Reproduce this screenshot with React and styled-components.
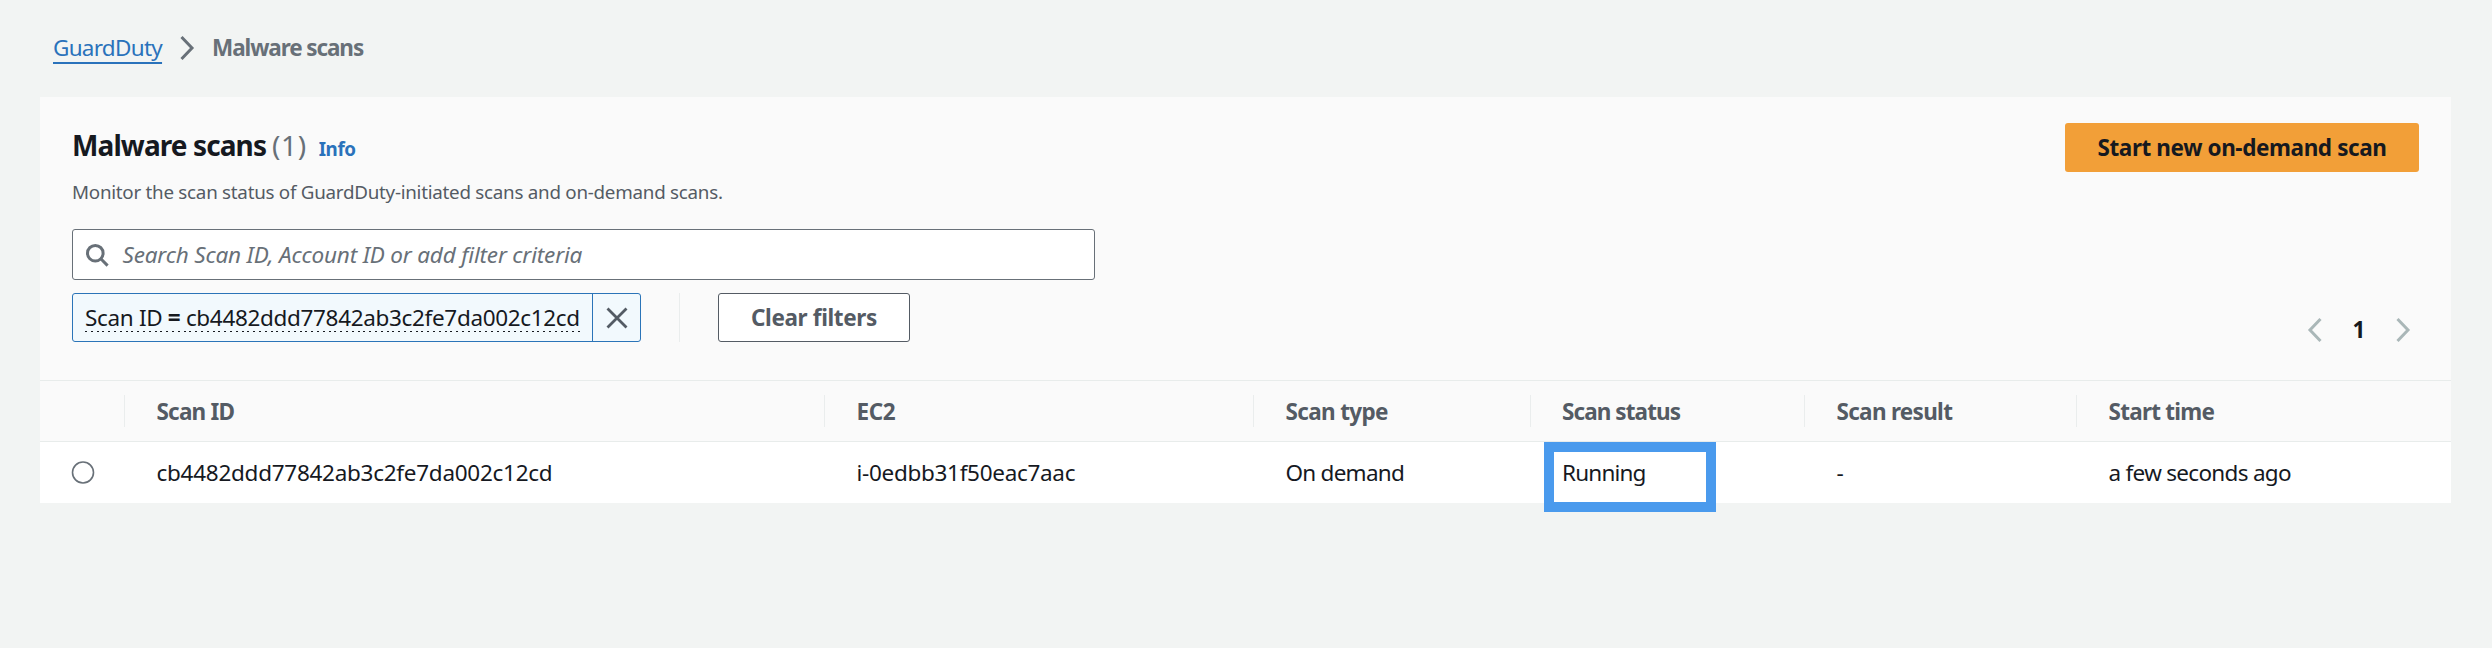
import React from "react";
import styled, { createGlobalStyle } from "styled-components";

const Global = createGlobalStyle`
  * { box-sizing: border-box; }
  body { margin: 0; background: #f2f4f3; color: #16191f; font-family: "Noto Sans", "Open Sans", sans-serif; font-size: 22.5px; }
  button { font: inherit; margin: 0; padding: 0; cursor: pointer; }
  svg { display: block; flex: none; }
`;

const Page = styled.main`min-height: 648px; background: #f2f4f3; padding: 0 41px 0 40px;`;

const Label = styled.span`
  white-space: nowrap;
  letter-spacing: ${(p) => p.$spacing || 0}px;
  font-weight: ${(p) => (p.$bold ? 700 : "inherit")};
`;

const Breadcrumbs = styled.nav`
  display: flex; align-items: center; height: 97px; padding: 0 0 3px 13px; color: #687078;
`;
const CrumbLink = styled.a`
  color: #2a72bb;
  text-decoration: underline;
  text-decoration-thickness: 2px;
  text-underline-offset: 6px;
  text-decoration-skip-ink: none;
`;
const CrumbDivider = styled.span`margin: 1px 17px 0 17px;`;

const Card = styled.section`background: #fff;`;
const CardTop = styled.header`background: #fafafa; padding: 26px 32px 38px; border-bottom: 1px solid #e8eceb;`;
const TitleRow = styled.div`display: flex; justify-content: space-between; height: 49px;`;
const Title = styled.h1`
  margin: 0; display: flex; align-items: baseline; font-size: 28px; line-height: 44px; font-weight: 700;
`;
const Count = styled.span`margin-left: 6px; font-weight: 400; color: #687078;`;
const Info = styled.a`margin-left: 12px; font-size: 18.8px; font-weight: 700; color: #2a72bb;`;
const Primary = styled.button`
  width: 354px; height: 49px; border: 0; border-radius: 3px; background: #f29f38; color: #16191f; font-weight: 700;
`;
const Description = styled.p`margin: 5px 0 22px; font-size: 18.8px; line-height: 30px; color: #545b64;`;

const Toolbar = styled.div`display: flex; justify-content: space-between; align-items: flex-end;`;
const Filters = styled.div`display: flex; flex-direction: column; gap: 13px;`;
const Search = styled.div`
  display: flex; align-items: center; width: 1023px; height: 51px; padding-left: 13px;
  border: 1px solid #687078; border-radius: 3px; background: #fff; color: #687078; font-style: italic;
`;
const Placeholder = styled.span`margin-left: 12.5px;`;
const TokenRow = styled.div`display: flex; height: 49px;`;
const Token = styled.div`
  display: flex; width: 569px; border: 1px solid #2b74b8; border-radius: 3px; background: #f2f9fd;
`;
const TokenLabel = styled.div`width: 520px; padding: 1px 0 0 12px; border-right: 1px solid #2b74b8;`;
const TokenText = styled.span`
  display: inline-block;
  height: 37px;
  line-height: 46px;
  background: repeating-linear-gradient(90deg, #16191f 0 2px, transparent 2px 5.8px) left bottom / 100% 1px no-repeat;
`;
const Dismiss = styled.button`
  flex: 1; display: flex; align-items: center; justify-content: center; border: 0; background: none; color: #545b64;
`;
const Separator = styled.div`width: 1px; margin: 0 38px; background: #eaeded;`;
const ClearButton = styled.button`
  width: 192px; border: 1px solid #545b64; border-radius: 3px; background: #fff; color: #545b64; font-weight: 700;
`;
const Pagination = styled.div`display: flex; align-items: center; height: 25px; padding-right: 8px; color: #aab7b8;`;
const PageNumber = styled.span`width: 72px; text-align: center; color: #16191f; font-weight: 700; line-height: 25px;`;

const Row = styled.div`
  display: grid; align-items: center; height: 61px;
  grid-template-columns: 84px 700px 429px 276.5px 274.5px 272px 1fr;
`;
const HeadRow = styled(Row)`background: #fafafa; border-bottom: 1px solid #e8eceb; color: #545b64; font-weight: 700;`;
const HeadCell = styled.div`height: 32px; line-height: 33px; padding-left: 31.5px; border-left: 1px solid #eaeded;`;
const Cell = styled.div`position: relative; padding-left: 32.5px; line-height: 61px;`;
const RadioCell = styled.div`padding-left: 31px;`;
const Highlight = styled.div`
  position: absolute; left: 14px; top: 0; width: 172px; height: 70px; border: 10px solid #4a9aed;
`;

const Chevron = ({ left }) => (
  <svg width="16" height="26" viewBox="0 0 16 26" fill="none" stroke="currentColor" strokeWidth="3">
    <path d={left ? "M13.5 2 3 13 13.5 24" : "M2.5 2 13 13 2.5 24"} />
  </svg>
);

const SearchIcon = () => (
  <svg width="24" height="24" viewBox="0 0 24 24" fill="none" stroke="currentColor" strokeWidth="3">
    <circle cx="9.3" cy="10.2" r="7.8" />
    <path d="m14.8 15.8 6.8 6.8" />
  </svg>
);

const CloseIcon = () => (
  <svg width="22" height="22" viewBox="0 0 22 22" stroke="currentColor" strokeWidth="2.8">
    <path d="m1.5 1.5 19 19m0-19-19 19" />
  </svg>
);

const RadioIcon = () => (
  <svg width="24" height="24" viewBox="0 0 24 24" fill="#fff" stroke="#687078" strokeWidth="1.6">
    <circle cx="12" cy="11.5" r="10.5" />
  </svg>
);

const scanId = "cb4482ddd77842ab3c2fe7da002c12cd";

const columns = [
  { title: "Scan ID", spacing: -0.8 },
  { title: "EC2", spacing: -0.4 },
  { title: "Scan type", spacing: -0.65 },
  { title: "Scan status", spacing: -0.92 },
  { title: "Scan result", spacing: -0.7 },
  { title: "Start time", spacing: -0.75 },
];

const scan = [
  { text: scanId, spacing: -0.27 },
  { text: "i-0edbb31f50eac7aac", spacing: -0.3 },
  { text: "On demand", spacing: -0.75 },
  { text: "Running", spacing: -0.8, highlighted: true },
  { text: "-", spacing: 0 },
  { text: "a few seconds ago", spacing: -0.7 },
];

export default function App() {
  return (
    <Page>
      <Global />
      <Breadcrumbs>
        <CrumbLink><Label $spacing={-0.72}>GuardDuty</Label></CrumbLink>
        <CrumbDivider><Chevron /></CrumbDivider>
        <Label $bold $spacing={-1.1}>Malware scans</Label>
      </Breadcrumbs>
      <Card>
        <CardTop>
          <TitleRow>
            <Title>
              <Label $spacing={-0.9}>Malware scans</Label>
              <Count><Label $spacing={0.6}>(1)</Label></Count>
              <Info><Label $spacing={-0.4}>Info</Label></Info>
            </Title>
            <Primary><Label $spacing={-0.4}>Start new on-demand scan</Label></Primary>
          </TitleRow>
          <Description>
            <Label $spacing={-0.26}>Monitor the scan status of GuardDuty-initiated scans and on-demand scans.</Label>
          </Description>
          <Toolbar>
            <Filters>
              <Search>
                <SearchIcon />
                <Placeholder><Label $spacing={-0.17}>Search Scan ID, Account ID or add filter criteria</Label></Placeholder>
              </Search>
              <TokenRow>
                <Token>
                  <TokenLabel>
                    <TokenText><Label $spacing={-0.33}>Scan ID <b>=</b> {scanId}</Label></TokenText>
                  </TokenLabel>
                  <Dismiss><CloseIcon /></Dismiss>
                </Token>
                <Separator />
                <ClearButton><Label $spacing={-0.36}>Clear filters</Label></ClearButton>
              </TokenRow>
            </Filters>
            <Pagination>
              <Chevron left />
              <PageNumber>1</PageNumber>
              <Chevron />
            </Pagination>
          </Toolbar>
        </CardTop>
        <HeadRow>
          <span />
          {columns.map((c) => (
            <HeadCell key={c.title}><Label $spacing={c.spacing}>{c.title}</Label></HeadCell>
          ))}
        </HeadRow>
        <Row>
          <RadioCell><RadioIcon /></RadioCell>
          {scan.map((c) => (
            <Cell key={c.text}>
              <Label $spacing={c.spacing}>{c.text}</Label>
              {c.highlighted && <Highlight />}
            </Cell>
          ))}
        </Row>
      </Card>
    </Page>
  );
}
